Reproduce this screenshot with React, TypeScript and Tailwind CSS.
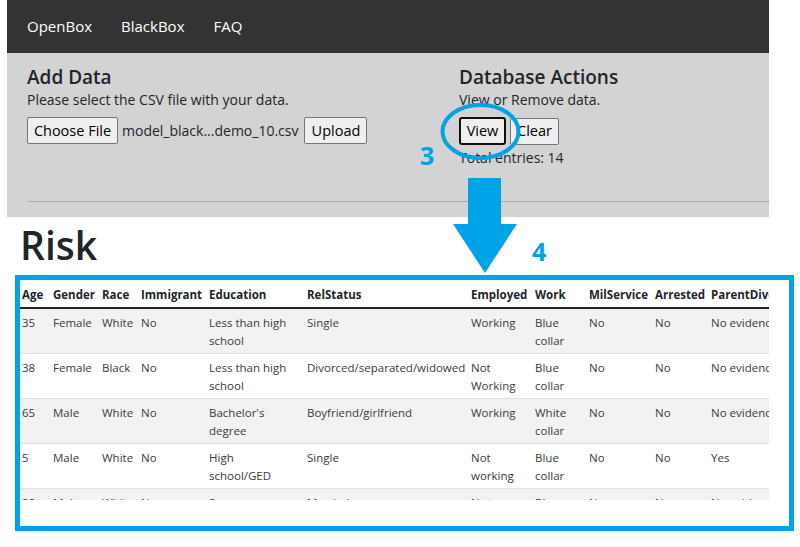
import React from "react";

const cols = [
  { h: "Age", w: 31 },
  { h: "Gender", w: 49 },
  { h: "Race", w: 39 },
  { h: "Immigrant", w: 68 },
  { h: "Education", w: 98 },
  { h: "RelStatus", w: 164 },
  { h: "Employed", w: 64 },
  { h: "Work", w: 54 },
  { h: "MilService", w: 66 },
  { h: "Arrested", w: 56 },
  { h: "ParentDivorced", w: 110 },
];

const rows: string[][][] = [
  [["35"], ["Female"], ["White"], ["No"], ["Less than high", "school"], ["Single"], ["Working"], ["Blue", "collar"], ["No"], ["No"], ["No evidence"]],
  [["38"], ["Female"], ["Black"], ["No"], ["Less than high", "school"], ["Divorced/separated/widowed"], ["Not", "Working"], ["Blue", "collar"], ["No"], ["No"], ["No evidence"]],
  [["65"], ["Male"], ["White"], ["No"], ["Bachelor's", "degree"], ["Boyfriend/girlfriend"], ["Working"], ["White", "collar"], ["No"], ["No"], ["No evidence"]],
  [["5"], ["Male"], ["White"], ["No"], ["High", "school/GED"], ["Single"], ["Not", "working"], ["Blue", "collar"], ["No"], ["No"], ["Yes"]],
  [["28"], ["Male"], ["White"], ["No"], ["Some", "college"], ["Married"], ["Not", "working"], ["Blue", "collar"], ["No"], ["No"], ["No evidence"]],
];

const font = { fontFamily: '"Open Sans", "Noto Sans", sans-serif' };

export default function App() {
  return (
    <div className="relative w-[800px] h-[547px] bg-white overflow-hidden" style={font}>
      <div className="ml-[7px] w-[762px] h-[500px] overflow-hidden bg-white text-[#212529]">
        {/* navbar */}
        <div className="h-[53px] bg-[#333333] flex items-center pl-[20px] gap-[29px] text-white text-[15px]">
          <span>OpenBox</span>
          <span>BlackBox</span>
          <span>FAQ</span>
        </div>
        {/* panel */}
        <div className="h-[164px] bg-[#d3d3d3] pl-[20px] pt-[11px]">
          <div className="grid grid-cols-[432px_1fr]">
            <div>
              <div className="text-[19px] font-semibold leading-[26px]">Add Data</div>
              <div className="text-[14px] leading-[22px] mt-[-1px]">Please select the CSV file with your data.</div>
              <div className="flex items-center mt-[6px] text-[14px]">
                <button className="h-[27px] w-[91px] bg-[#efefef] border border-[#767676] rounded-[2px] text-black text-[14.5px]">Choose File</button>
                <span className="ml-[4px]">model_black...demo_10.csv</span>
                <button className="ml-[6px] h-[27px] w-[63px] bg-[#efefef] border border-[#767676] rounded-[2px] text-black text-[14.5px]">Upload</button>
              </div>
            </div>
            <div>
              <div className="text-[19px] font-semibold leading-[26px]">Database Actions</div>
              <div className="text-[14px] leading-[22px] mt-[-1px]">View or Remove data.</div>
              <div className="flex items-center mt-[6px] text-[14.5px] gap-[4px]">
                <button className="h-[28px] w-[47px] bg-[#efefef] border-2 border-[#101010] rounded-[3px] text-black">View</button>
                <button className="h-[27px] w-[49px] bg-[#efefef] border border-[#767676] rounded-[2px] text-black">Clear</button>
              </div>
              <div className="text-[14px] leading-[22px] mt-[2px]">Total entries: 14</div>
            </div>
          </div>
          <div className="mt-[32px] h-px bg-[#a9a9a9]" />
        </div>
        {/* Risk */}
        <div className="pl-[13px] pt-[3px] h-[63px]">
          <h1 className="text-[39px] font-semibold leading-[50px]">Risk</h1>
        </div>
        <table className="ml-[13px] table-fixed border-collapse text-[11.5px] leading-[18px]" style={{ width: 799 }}>
          <thead>
            <tr className="border-b-2 border-[#212529]">
              {cols.map((c) => (
                <th key={c.h} className="text-left font-bold px-[2px] pt-[6px] pb-[3px] whitespace-nowrap align-top overflow-hidden" style={{ width: c.w }}>
                  {c.h}
                </th>
              ))}
            </tr>
          </thead>
          <tbody>
            {rows.map((r, i) => (
              <tr key={i} className={(i % 2 === 0 ? "bg-[#f2f2f2]" : "bg-white") + " border-b border-[#dee2e6]"}>
                {r.map((cell, j) => (
                  <td key={j} className="px-[2px] pt-[5px] pb-[3px] align-top whitespace-nowrap overflow-hidden text-[#3a3a3a]">
                    {cell.map((l, k) => (
                      <div key={k}>{l}</div>
                    ))}
                  </td>
                ))}
              </tr>
            ))}
          </tbody>
        </table>
      </div>

      {/* annotations */}
      <div className="absolute left-[15px] top-[275px] w-[779px] h-[256px] border-[5px] border-[#00a2e8]" />
      <svg className="absolute left-0 top-0" width="800" height="547">
        <ellipse cx="480.5" cy="131.5" rx="38" ry="26.5" fill="none" stroke="#00a2e8" strokeWidth="4" />
        <polygon points="468,178 501,178 501,224 517,224 485,273 453,224 468,224" fill="#00a2e8" />
      </svg>
      <div className="absolute left-[420px] top-[138px] text-[25px] font-bold text-[#00a2e8] leading-[34px]">3</div>
      <div className="absolute left-[532px] top-[234px] text-[25px] font-bold text-[#00a2e8] leading-[34px]">4</div>
    </div>
  );
}
